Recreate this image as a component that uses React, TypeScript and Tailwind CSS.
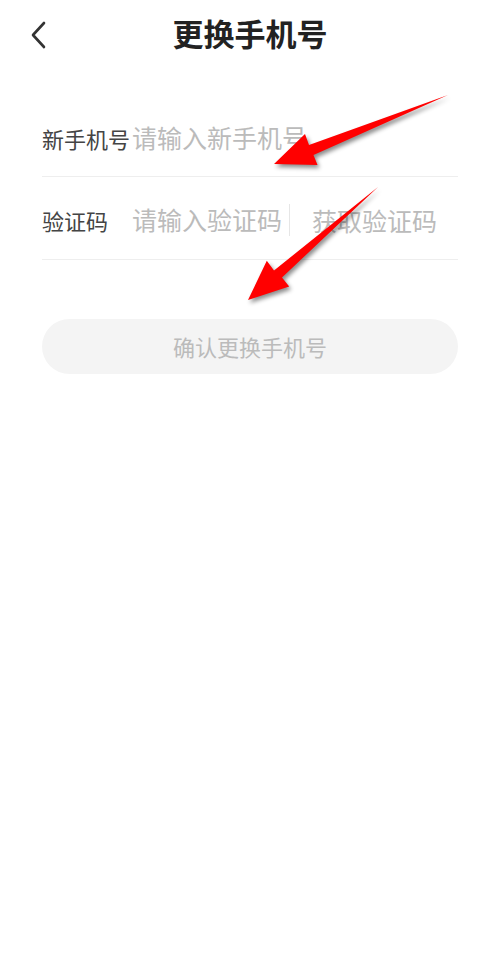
import React, { useState } from 'react';

const font = { fontFamily: '"Noto Sans CJK SC", "Noto Sans", sans-serif' };

const Arrow: React.FC<{ d: string }> = ({ d }) => (
  <path d={d} fill="#ff0000" />
);

export default function App() {
  const [phone, setPhone] = useState('');
  const [code, setCode] = useState('');

  return (
    <div className="relative w-[500px] h-[965px] bg-white" style={font}>
      {/* header */}
      <div className="relative h-[66px] flex items-center justify-center">
        <button className="absolute left-[26px] top-[18px] w-[24px] h-[34px] flex items-center justify-center">
          <svg width="18" height="28" viewBox="0 0 18 28" fill="none">
            <polyline points="15,2 4,14 15,26" stroke="#333" strokeWidth="2.6" strokeLinecap="round" strokeLinejoin="round" />
          </svg>
        </button>
        <h1 className="text-[31px] font-bold text-[#222] leading-none -mt-[2px]">更换手机号</h1>
      </div>

      <div className="px-[42px] pt-[30px]">
        <div className="h-[81px] pt-[4px] flex items-center border-b border-[#eeeeee]">
          <span className="w-[90px] shrink-0 text-[22px] text-[#444]">新手机号</span>
          <input
            value={phone}
            onChange={e => setPhone(e.target.value)}
            placeholder="请输入新手机号"
            className="flex-1 min-w-0 text-[25px] text-[#333] placeholder:text-[#bbbbbb] outline-none bg-transparent"
          />
        </div>

        <div className="h-[83px] pt-[4px] flex items-center border-b border-[#eeeeee]">
          <span className="w-[90px] shrink-0 text-[22px] text-[#444]">验证码</span>
          <input
            value={code}
            onChange={e => setCode(e.target.value)}
            placeholder="请输入验证码"
            className="flex-1 min-w-0 text-[25px] text-[#333] placeholder:text-[#bbbbbb] outline-none bg-transparent"
          />
          <button className="h-[32px] border-l border-[#e6e6e6] pl-[22px] pr-[21px] text-[25px] leading-[32px] text-[#bbbbbb]">
            获取验证码
          </button>
        </div>

        <button className="mt-[59px] w-full h-[55px] rounded-full bg-[#f4f4f4] text-[22px] text-[#bbbbbb]">
          确认更换手机号
        </button>
      </div>

      {/* annotation arrows */}
      <svg
        className="absolute inset-0 pointer-events-none drop-shadow-[2px_3px_2px_rgba(0,0,0,0.45)]"
        width="500"
        height="965"
        viewBox="0 0 500 965"
      >
        <Arrow d="M274,164 L305,134 L309,145 L448,95 L313.5,155 L317.5,165 Z" />
        <Arrow d="M248,300 L266.8,260.8 L274,270.5 L378,187 L282,277.5 L289.2,286.4 Z" />
      </svg>
    </div>
  );
}
